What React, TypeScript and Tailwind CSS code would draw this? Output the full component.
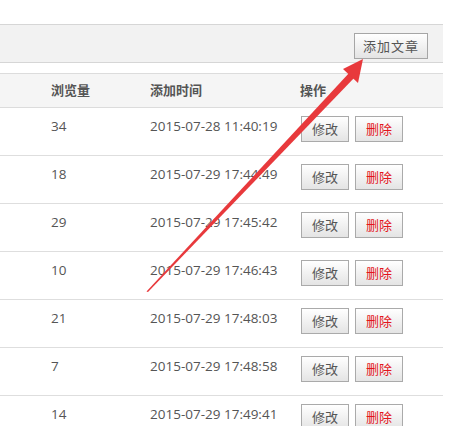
const rows = [
  { views: "34", time: "2015-07-28 11:40:19" },
  { views: "18", time: "2015-07-29 17:44:49" },
  { views: "29", time: "2015-07-29 17:45:42" },
  { views: "10", time: "2015-07-29 17:46:43" },
  { views: "21", time: "2015-07-29 17:48:03" },
  { views: "7", time: "2015-07-29 17:48:58" },
  { views: "14", time: "2015-07-29 17:49:41" },
];

const font = "font-['Open_Sans','Noto_Sans_CJK_SC',sans-serif]";

function Btn({ children, danger }: { children: string; danger?: boolean }) {
  return (
    <button
      className={`h-[26px] w-[48px] border border-[#aaa] bg-gradient-to-b from-white to-[#e4e4e4] text-[13px] leading-none ${
        danger ? "text-[#e3161c]" : "text-[#555]"
      }`}
    >
      {children}
    </button>
  );
}

export default function App() {
  return (
    <div className={`relative w-[451px] h-[426px] overflow-hidden bg-white ${font}`}>
      <div className="pt-6 pr-2">
        {/* toolbar */}
        <div className="h-[39px] border-y border-[#d6d6d6] bg-[#f2f2f2] flex justify-end pt-2 pr-[15px]">
          <button className="h-[26px] w-[74px] border border-[#a6a6a6] bg-gradient-to-b from-white to-[#e4e4e4] text-[13px] leading-none text-[#555] tracking-[1px]">
            添加文章
          </button>
        </div>

        {/* table */}
        <div className="mt-[10px] text-[#555]">
          <div className="grid grid-cols-[51px_99px_150px_1fr] h-[35px] items-center border-y border-[#dcdcdc] bg-[#f5f5f5] text-[13px] font-semibold">
            <div />
            <div>浏览量</div>
            <div>添加时间</div>
            <div>操作</div>
          </div>
          {rows.map((r) => (
            <div
              key={r.time}
              className="grid grid-cols-[51px_99px_150px_1fr] h-[48px] items-start pt-2 border-b border-[#dedede] text-[13.5px] leading-[20px]"
            >
              <div />
              <div>{r.views}</div>
              <div>{r.time}</div>
              <div className="flex gap-[6px] pl-px">
                <Btn>修改</Btn>
                <Btn danger>删除</Btn>
              </div>
            </div>
          ))}
        </div>
      </div>

      {/* annotation arrow */}
      <svg className="absolute inset-0 pointer-events-none" width="451" height="426" viewBox="0 0 451 426">
        <path d="M146.5 291.5 L148 292 L355 77 L350 72 Z" fill="#e8393c" />
        <path d="M363 59 L343 69 L358 83 Z" fill="#e8393c" />
      </svg>
    </div>
  );
}
